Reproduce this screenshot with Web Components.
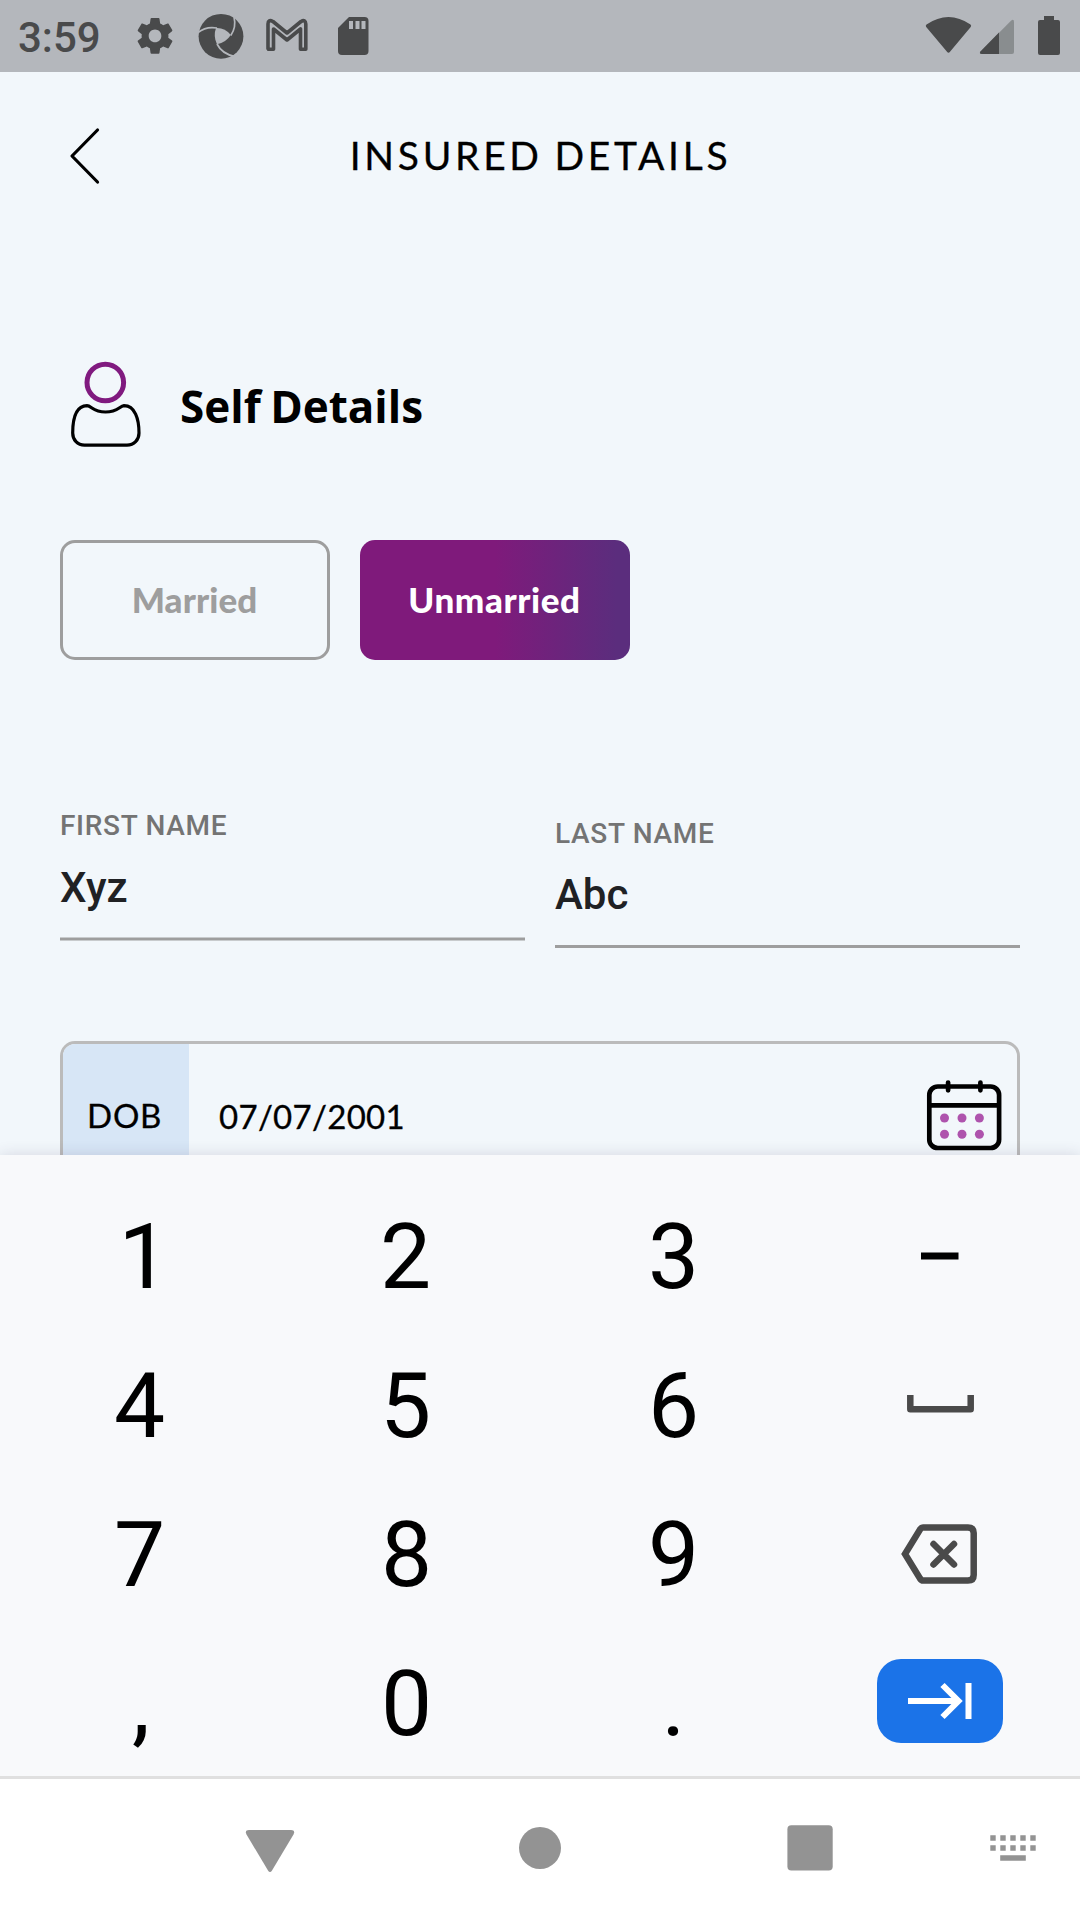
<!DOCTYPE html>
<html lang="en"><head><meta charset="utf-8"><title>Insured Details</title>
<style>html,body{margin:0;padding:0;background:#f2f7fb}body{width:1080px;height:1920px;overflow:hidden}</style></head>
<body>
<insured-screen></insured-screen>
<script>
const define=(name,html)=>customElements.define(name,class extends HTMLElement{
  constructor(){super();const t=document.createElement('template');t.innerHTML=html;this.attachShadow({mode:'open'}).append(t.content.cloneNode(true));}
});

define('status-bar',`<style>
:host{display:flex;height:72px;background:#b4b7bc;color:#494a4b;font:500 42px/76px Roboto,sans-serif;box-sizing:border-box}
.time{width:113px;padding-left:18px;white-space:nowrap}
svg{display:block;flex:none}
</style><div class="time">3:59</div>
<svg width="949" height="72" viewBox="131 0 949 72" fill="#494a4b">
<path transform="translate(132.7 13.6) scale(1.86)" d="M19.14 12.94c.04-.3.06-.61.06-.94 0-.32-.02-.64-.07-.94l2.03-1.58c.18-.14.23-.41.12-.61l-1.92-3.32c-.12-.22-.37-.29-.59-.22l-2.39.96c-.5-.38-1.03-.7-1.62-.94l-.36-2.54c-.04-.24-.24-.41-.48-.41h-3.84c-.24 0-.43.17-.47.41l-.36 2.54c-.59.24-1.13.57-1.62.94l-2.39-.96c-.22-.08-.47 0-.59.22L2.74 8.87c-.12.21-.08.47.12.61l2.03 1.58c-.05.3-.09.63-.09.94s.02.64.07.94l-2.03 1.58c-.18.14-.23.41-.12.61l1.92 3.32c.12.22.37.29.59.22l2.39-.96c.5.38 1.03.7 1.62.94l.36 2.54c.05.24.24.41.48.41h3.84c.24 0 .44-.17.47-.41l.36-2.54c.59-.24 1.13-.56 1.62-.94l2.39.96c.22.08.47 0 .59-.22l1.92-3.32c.12-.22.07-.47-.12-.61l-2.01-1.58zM12 15.4c-1.88 0-3.4-1.52-3.4-3.4s1.52-3.4 3.4-3.4 3.4 1.52 3.4 3.4-1.52 3.4-3.4 3.4z"/>
<circle cx="221" cy="36.3" r="22.4"/>
<path d="M216 28Q225 27.500 230.800 35Q226 42.500 217 44.300Q213 36 216 28Z" fill="#b4b7bc"/>
<g fill="none" stroke="#b4b7bc" stroke-width="1.700"><path d="M198 32.500Q206 26 217 28"/><path d="M234 17Q236.500 27 230.800 35.500"/><path d="M217 44Q222 54 235 56.500"/></g>
<path d="M268.500 49.300H273.500V29L287 40L300.500 29V49.300H305.800V24Q305.500 19 301 21.500L287 33L273 21.500Q268 19 268 24V48.500Z" fill="none" stroke="#494a4b" stroke-width="3.600" stroke-linejoin="round"/>
<path d="M349 17H364.500Q368.500 17 368.500 21V51Q368.500 55 364.500 55H342Q338 55 338 51V28Z"/><path d="M349 21h4v8h-4zM355.500 21h4v8h-4zM361.500 21h4v8h-4z" fill="#b4b7bc"/>
<path d="M926.500 24.500Q948.500 9.500 970.500 24.500Q971.700 25.500 970.700 27L950 51.700Q948.500 53.700 947 51.700L926.200 27Q925.200 25.500 926.500 24.500Z"/>
<path d="M1011 20.700Q1014 18.500 1014 22V52Q1014 54 1012 54H982Q978.500 54 980.700 51.300Z" fill="#898d8f"/><path d="M999 32.500V54H982Q978.500 54 980.700 51.300Z"/>
<path d="M1044 16H1054V20H1058Q1060 20 1060 22V53Q1060 55 1058 55H1040Q1038 55 1038 53V22Q1038 20 1040 20H1044Z"/>
</svg>`);

define('page-header',`<style>
:host{display:grid;grid-template-columns:170px 1fr 170px;height:168px;align-items:start;font:400 39px/48px Lato,sans-serif;color:#000}
svg{display:block;margin:54px 0 0 68px}.t{margin-top:59px;text-align:center;white-space:nowrap;letter-spacing:3.700px;word-spacing:-2px;padding-left:1px;-webkit-text-stroke:.3px #000}
</style><svg width="34" height="60" viewBox="0 0 34 60"><path d="M29.500 4L4 30L29.500 56" fill="none" stroke="#000" stroke-width="3.200" stroke-linecap="round" stroke-linejoin="round"/></svg><div class="t"><slot></slot></div><span></span>`);

define('section-title',`<style>
:host{display:flex;height:100px;padding-left:68px;align-items:flex-start;font:700 44px/52px "Open Sans",sans-serif;letter-spacing:0;word-spacing:-2px;color:#000}
svg{display:block}.t{margin:25px 0 0 36px;white-space:nowrap}
</style><svg width="76" height="100" viewBox="68 355 76 100" fill="none"><circle cx="105.300" cy="382.500" r="18.300" stroke="#801a7f" stroke-width="5"/><path d="M87 405.700C76 406 72.700 419 72.700 433C72.700 440 77.500 445.200 84.500 445.200H127C134 445.200 139 440 139 433C139 419 135 405.700 124 405.700C119.500 406 118 412 105.500 412C93 412 91.500 405.700 87 405.700Z" stroke="#000" stroke-width="3.200"/></svg><div class="t"><slot></slot></div>`);

define('choice-chip',`<style>
:host{display:flex;box-sizing:border-box;width:270px;height:120px;border:3px solid #9e9e9e;border-radius:15px;align-items:center;justify-content:center;color:#9e9e9e;font:900 35px/44px Lato,sans-serif;padding:0 1px 3px 0;letter-spacing:.1px}
:host([selected]){border:0;letter-spacing:.6px;background:linear-gradient(90deg,#7f1a7b 0,#7f1a7b 50%,#5b2d7d 95%);color:#fff}
</style><span><slot></slot></span>`);

define('text-field',`<style>
:host{display:flex;flex-direction:column;width:465px;font-family:Roboto,sans-serif;font-weight:500}
.l{font-size:28px;line-height:34px;letter-spacing:.7px;color:#747474;white-space:nowrap}
.v{font-size:42px;line-height:50px;color:#202124;margin-top:19px}
.u{height:3px;background:#9e9e9e;margin-top:25px}
:host([soft]) .v{margin-top:20px}
:host([soft]) .u{height:2px;margin-top:24px;border:solid #c8cbcd;border-width:1px 0}
</style><div class="l"><slot name="label"></slot></div><div class="v"><slot></slot></div><div class="u"></div>`);

define('date-field',`<style>
:host{display:flex;box-sizing:border-box;width:960px;height:150px;border:3px solid #bbb;border-radius:15px;overflow:hidden;font:400 33px/40px Lato,sans-serif;color:#000}
.l{width:126px;background:#d7e6f6;box-sizing:border-box;padding:51px 0 0 24px;flex:none;letter-spacing:.8px}
.v{flex:1;padding:52px 0 0 30px;letter-spacing:.3px}.l,.v{-webkit-text-stroke:.3px #000}svg{display:block;margin:33px 13px 0 0}
</style><div class="l"><slot name="label"></slot></div><div class="v"><slot></slot></div>
<svg width="80" height="78" viewBox="924 1077 80 78" fill="none" stroke="#000" stroke-width="4.700" stroke-linecap="round"><rect x="929.300" y="1086.500" width="69.800" height="61.500" rx="8.500"/><path d="M930 1105.400H998M948.100 1082.500V1090.300M980.400 1082.500V1090.300"/><g fill="#ae53ad" stroke="none"><circle cx="944.500" cy="1118" r="4.500"/><circle cx="962" cy="1118" r="4.500"/><circle cx="979.400" cy="1118" r="4.500"/><circle cx="944.500" cy="1134.300" r="4.500"/><circle cx="962" cy="1134.300" r="4.500"/><circle cx="979.400" cy="1134.300" r="4.500"/></g></svg>`);

define('key-cap',`<style>
:host{display:flex;box-sizing:border-box;height:149px;padding-top:3px;align-items:center;justify-content:center;font:400 91px/149px Roboto,sans-serif;color:#000}
:host([icon]){padding:0}
:host([right]){padding-left:9px}
:host([nudge]){padding-right:2px}
::slotted(svg){display:block;overflow:visible}
</style><slot></slot>`);

define('number-pad',`<style>
:host{display:grid;grid-template-columns:repeat(4,267px);grid-auto-rows:149px;box-sizing:border-box;height:624px;padding:26px 6px 0;background:#f8f9fb;border-bottom:3px solid #e0e0e0;box-shadow:0 0 14px rgba(60,50,90,.16);position:relative}
</style>
<key-cap right>1</key-cap><key-cap nudge>2</key-cap><key-cap>3</key-cap><key-cap icon><svg width="127" height="85" viewBox="877 1213 127 85"><path d="M921 1252.500h37.500v7h-37.500z"/></svg></key-cap>
<key-cap>4</key-cap><key-cap nudge>5</key-cap><key-cap>6</key-cap><key-cap icon><svg width="127" height="85" viewBox="877 1362 127 85"><path d="M910.300 1395V1409.300H970.700V1395" fill="none" stroke="#4a4a4a" stroke-width="6.500" stroke-linejoin="round"/></svg></key-cap>
<key-cap>7</key-cap><key-cap>8</key-cap><key-cap>9</key-cap><key-cap icon><svg width="127" height="85" viewBox="877 1511 127 85" fill="none" stroke="#4a4a4a" stroke-width="6.500"><path d="M923 1527.400H968Q973.700 1527.400 973.700 1533V1575Q973.700 1580.600 968 1580.600H923Q921.500 1580.600 920 1578.500L905 1554L920 1529.500Q921.500 1527.400 923 1527.400Z"/><path d="M933.500 1544L954 1564.500M954 1544L933.500 1564.500" stroke-linecap="round"/></svg></key-cap>
<key-cap style="padding-left:3px">,</key-cap><key-cap>0</key-cap><key-cap>.</key-cap><key-cap icon><svg width="127" height="85" viewBox="877 1660 127 85" fill="none" stroke="#fff" stroke-width="6"><rect x="877" y="1659" width="126" height="84" rx="24" fill="#1b73e8" stroke="none"/><path d="M908 1701H957M942.500 1685L958.500 1701L942.500 1717M968.500 1683V1719"/></svg></key-cap>`);

define('nav-bar',`<style>:host{display:block;height:141px;background:#fff;position:relative;z-index:1}svg{display:block}</style>
<svg width="1080" height="141" viewBox="0 1779 1080 141" fill="#939393"><path d="M249 1830H291Q295.500 1830 293.500 1834.500L272 1870.500Q270 1873.500 268 1870.500L246.500 1834.500Q244.500 1830 249 1830Z"/><circle cx="540" cy="1848" r="21"/><rect x="787.400" y="1825.300" width="45.300" height="45.300" rx="4"/><path d="M990.300 1835.300h5.400v5.400h-5.400zm10 0h5.400v5.400h-5.400zm10 0h5.400v5.400h-5.400zm10 0h5.400v5.400h-5.400zm10 0h5.400v5.400h-5.400zm-40 10h5.400v5.400h-5.400zm10 0h5.400v5.400h-5.400zm10 0h5.400v5.400h-5.400zm10 0h5.400v5.400h-5.400zm10 0h5.400v5.400h-5.400zM1000.200 1855.300h25.600v5.400h-25.600z"/></svg>`);

define('insured-screen',`<style>
:host{display:flex;flex-direction:column;width:1080px;height:1920px;background:#f2f7fb;overflow:hidden}
.content{display:flex;flex-direction:column;height:1083px;flex:none;overflow:hidden}
.content>*{flex:none}
section-title{margin-top:115px}.chips{display:flex;gap:30px;padding:85px 60px 0}
.fields{display:flex;gap:30px;padding:149px 60px 0;height:145px}
.fields text-field:last-child{margin-top:8px}
date-field{margin:87px 60px 0}
</style><status-bar></status-bar><div class="content"><page-header>INSURED DETAILS</page-header><section-title>Self Details</section-title>
<div class="chips"><choice-chip>Married</choice-chip><choice-chip selected>Unmarried</choice-chip></div>
<div class="fields"><text-field soft><span slot="label">FIRST NAME</span>Xyz</text-field><text-field><span slot="label">LAST NAME</span>Abc</text-field></div>
<date-field><span slot="label">DOB</span>07/07/2001</date-field></div>
<number-pad></number-pad><nav-bar></nav-bar>`);
</script>
</body></html>
